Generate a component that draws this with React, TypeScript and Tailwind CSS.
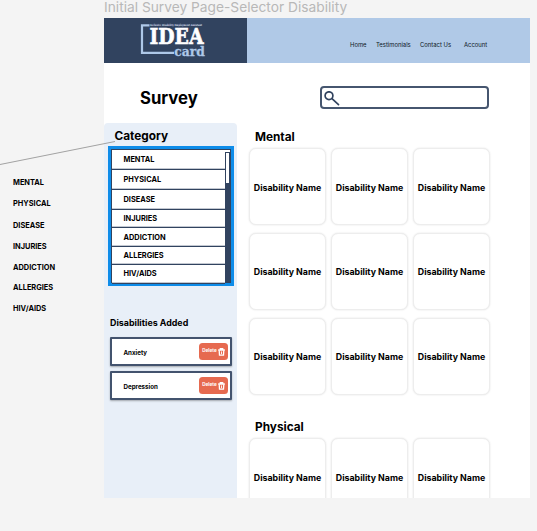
import React from "react";

const categories = [
  { name: "MENTAL", row: "h-[20px]", note: "h-[21px]" },
  { name: "PHYSICAL", row: "h-[20px]", note: "h-[22px]" },
  { name: "DISEASE", row: "h-[20px]", note: "h-[21px]" },
  { name: "INJURIES", row: "h-[18px]", note: "h-[21px]" },
  { name: "ADDICTION", row: "h-[19px] pt-[2px]", note: "h-[20px]" },
  { name: "ALLERGIES", row: "h-[18px]", note: "h-[21px]" },
  { name: "HIV/AIDS", row: "h-[19px]", note: "h-[21px]" },
];

function Logo() {
  return (
    <svg width="143" height="45" viewBox="0 0 143 45" className="block">
      <path d="M45.5 7.3H38V34.8H70" fill="none" stroke="#aec8e8" strokeWidth="2.2" />
      <text x="46" y="8.4" fontSize="2.9" fontWeight="700" fill="#d5dfec" textLength="52" lengthAdjust="spacingAndGlyphs" fontFamily="DejaVu Serif, serif">
        Inclusive Disability Employment Assistant
      </text>
      <text x="45.5" y="26.2" fontSize="21.5" fontWeight="700" fill="#fff" stroke="#fff" strokeWidth="0.6" textLength="54" lengthAdjust="spacingAndGlyphs" fontFamily="DejaVu Serif, serif">
        IDEA
      </text>
      <text x="70.3" y="38.2" fontSize="13.8" fontWeight="700" fill="#aec8e8" stroke="#aec8e8" strokeWidth="0.3" textLength="30.5" lengthAdjust="spacingAndGlyphs" fontFamily="DejaVu Serif, serif">
        card
      </text>
    </svg>
  );
}

function TrashIcon() {
  return (
    <svg width="7" height="8" viewBox="0 0 7 8" className="block" fill="none" stroke="#fff">
      <path d="M0.2 2H6.8M2.3 1.7V0.7H4.7V1.7" strokeWidth="1.3" />
      <path d="M1.2 2.2L1.5 7.2H5.5L5.8 2.2" strokeWidth="1.3" />
      <path d="M3.5 3.4V6.2" strokeWidth="0.9" />
    </svg>
  );
}

function Header() {
  return (
    <header className="flex h-[45px] bg-[#b0c9e7]">
      <div className="w-[143px] bg-[#31435f]">
        <Logo />
      </div>
      <nav className="flex flex-1 items-center pt-[8px] pl-[103px] text-[5.9px] leading-none text-[#0d1724]">
        <span className="w-[26px]">Home</span>
        <span className="w-[44px]">Testimonials</span>
        <span className="w-[44px]">Contact Us</span>
        <span>Account</span>
      </nav>
    </header>
  );
}

function Added({ name }: { name: string }) {
  return (
    <div className="flex h-[29px] items-center rounded-[1px] border-2 border-[#43536e] bg-white pr-[2px] pl-[11.5px] shadow-[0_1px_2px_rgba(0,0,0,0.3)]">
      <span className="flex-1 pt-[3px] text-[6.2px] font-bold leading-none">{name}</span>
      <button className="flex h-[17px] w-[29px] items-center justify-center gap-[1px] rounded-[3.5px] bg-[#e66a50] text-[4.6px] font-bold leading-none text-white">
        Delete
        <TrashIcon />
      </button>
    </div>
  );
}

function Sidebar() {
  return (
    <aside className="h-[375px] w-[133px] rounded-t-[4px] bg-[#e8eff8] pl-[3.5px]">
      <h2 className="flex h-[23px] items-center pt-[5px] pl-[7px] text-[11.8px] font-bold leading-none">Category</h2>
      <div className="flex h-[140px] w-[126px] border-[3px] border-[#0d8ce9] bg-[#31435f]">
        <ul className="w-[114px] pt-px pl-px">
          {categories.map((c) => (
            <li key={c.name} className={`flex items-center border-b-[1px] border-[#31435f] bg-white pl-[12px] text-[7.4px] font-bold leading-none shadow-[inset_0_-1px_0_#c3c8d1] ${c.row}`}>
              {c.name}
            </li>
          ))}
        </ul>
        <div className="flex-1 border-r border-[#31435f]">
          <div className="mt-px h-[2px] bg-white" />
          <div className="mx-px mt-px h-[30px] bg-white" />
        </div>
      </div>
      <h3 className="mt-[31px] mb-[9px] pl-[2.5px] text-[8.9px] font-bold leading-[11px]">Disabilities Added</h3>
      <div className="ml-[2.5px] flex w-[122px] flex-col gap-[5px]">
        <Added name="Anxiety" />
        <Added name="Depression" />
      </div>
    </aside>
  );
}

function Card({ first }: { first: boolean }) {
  return (
    <div className={`flex h-[77px] w-[77px] items-center justify-center rounded-[7px] border border-[#ededed] bg-white text-[8.8px] font-bold leading-none whitespace-nowrap shadow-[0_0_2px_rgba(0,0,0,0.12)] ${first ? "pt-[4px]" : "pt-[2px]"}`}>
      Disability Name
    </div>
  );
}

function Cards({ count }: { count: number }) {
  return (
    <div className="grid grid-cols-[77px_77px_77px] gap-x-[5px] gap-y-[8px]">
      {Array.from({ length: count }, (_, i) => (
        <Card key={i} first={i < 3} />
      ))}
    </div>
  );
}

export default function App() {
  return (
    <div className="relative flex h-[531px] w-[537px] overflow-hidden bg-[#f4f4f4] font-['Inter',sans-serif] text-black">
      <ul className="w-[104px] pt-[172px] pl-[13px]">
        {categories.map((c) => (
          <li key={c.name} className={`text-[7.4px] font-bold leading-[21px] ${c.note}`}>
            {c.name}
          </li>
        ))}
      </ul>
      <div className="w-[426px]">
        <div className="h-[18px] text-[13.75px] leading-[14px] whitespace-nowrap text-[#b8b8b8]">Initial Survey Page-Selector Disability</div>
        <main className="h-[480px] overflow-hidden bg-white">
          <Header />
          <div className="flex h-[60px] pl-[36px]">
            <h1 className="w-[180px] pt-[25px] text-[16.7px] font-bold leading-[20px]">Survey</h1>
            <div className="mt-[23px] h-[23px] w-[169px] rounded-[4px] border-2 border-[#46566f] pt-[3px] pl-[2px]">
              <svg width="16" height="15" viewBox="0 0 16 15" fill="none" stroke="#31435f" strokeWidth="1.7" strokeLinecap="round">
                <circle cx="5" cy="4.7" r="3.9" />
                <path d="M8 7.7L14.5 13.6" />
              </svg>
            </div>
          </div>
          <div className="flex">
            <Sidebar />
            <section className="pl-[12px]">
              <h2 className="mb-[3px] pt-[7px] pl-[6px] text-[11.8px] font-bold leading-[15px]">Mental</h2>
              <Cards count={9} />
              <h2 className="mt-[25px] mb-[3px] pl-[6px] text-[11.8px] font-bold leading-[15px]">Physical</h2>
              <Cards count={3} />
            </section>
          </div>
        </main>
      </div>
      <svg className="pointer-events-none absolute top-[140px] left-0" width="120" height="26" fill="none">
        <path d="M0 24.5L115 1.5" stroke="#8d8d8d" strokeWidth="0.8" />
      </svg>
    </div>
  );
}
